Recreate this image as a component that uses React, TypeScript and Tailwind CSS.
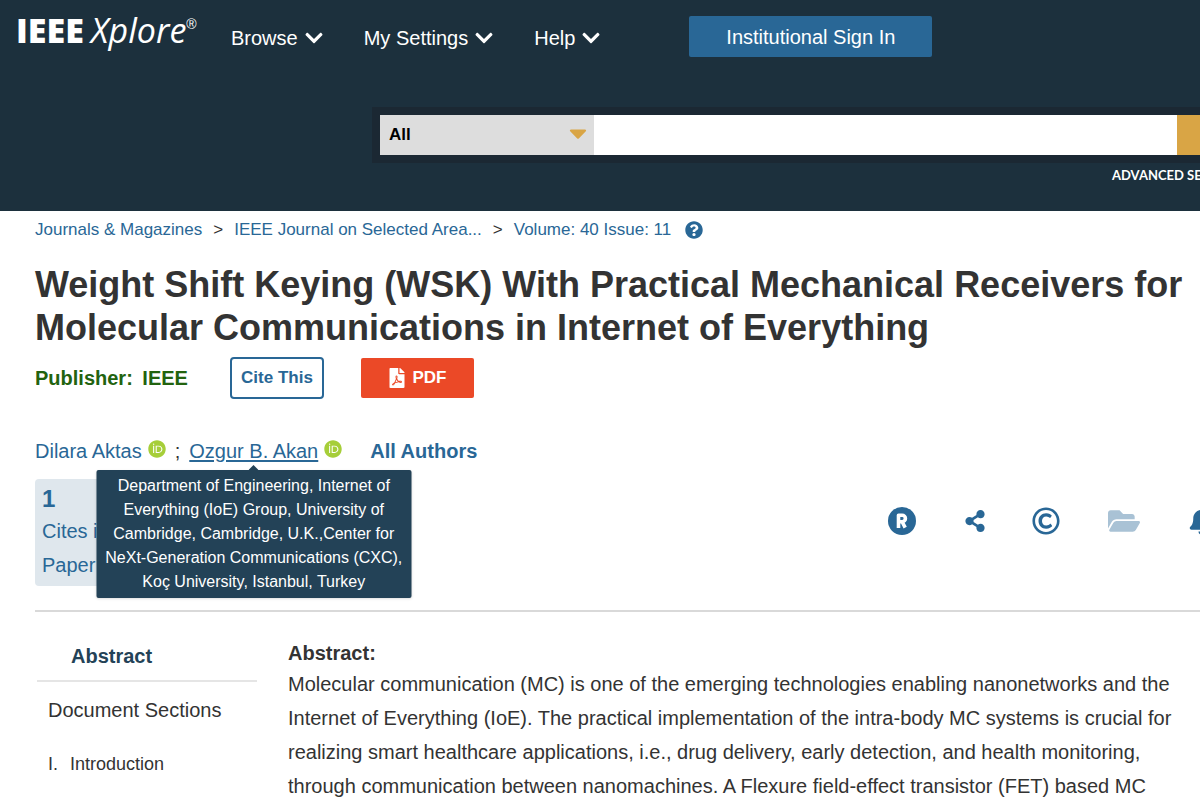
import { useState } from "react";
import {
  FaBell,
  FaCaretDown,
  FaChevronDown,
  FaFilePdf,
  FaFolderOpen,
  FaOrcid,
  FaQuestionCircle,
  FaRegCopyright,
  FaShareAlt,
} from "react-icons/fa";

const menus = ["Browse", "My Settings", "Help"];

const breadcrumbs = [
  "Journals & Magazines",
  "IEEE Journal on Selected Area...",
  "Volume: 40 Issue: 11",
];

const Logo = () => (
  <a
    href="#"
    className="flex w-[215px] shrink-0 pl-4 font-['Open_Sans'] text-[34px] leading-[60px] whitespace-nowrap"
  >
    <span className="font-extrabold">IEEE</span>
    <span className="ml-[7px] italic">Xplore</span>
    <span className="font-['Liberation_Sans'] text-sm leading-[48px]">®</span>
  </a>
);

const Header = () => {
  const [scope, setScope] = useState("All");
  const [query, setQuery] = useState("");

  return (
    <header className="h-[211px] bg-[#1c303d] text-white">
      <div className="flex h-[107px] items-start">
        <Logo />
        <nav className="flex gap-10 pt-[22px] pl-4">
          {menus.map((menu) => (
            <button
              key={menu}
              className="flex items-center gap-[6px] text-xl leading-8"
            >
              {menu}
              <FaChevronDown className="h-5 w-5" />
            </button>
          ))}
        </nav>
        <button className="mt-4 ml-[88px] h-[41px] w-[243px] rounded-xs bg-[#296796] text-xl">
          Institutional Sign In
        </button>
      </div>
      <form className="ml-[372px] flex bg-[#1b2833] py-2 pl-2">
        <div className="relative w-[214px] shrink-0">
          <select
            aria-label="Search scope"
            className="h-10 w-full appearance-none bg-[#dddddd] px-[9px] text-[17px] font-bold text-black"
            value={scope}
            onChange={(e) => setScope(e.target.value)}
          >
            <option>All</option>
          </select>
          <FaCaretDown className="pointer-events-none absolute top-1 right-[2px] h-7 w-7 text-[#d9a545]" />
        </div>
        <input
          type="text"
          aria-label="Search"
          className="h-10 min-w-0 grow bg-white px-3 text-[17px] text-black focus:outline-none"
          value={query}
          onChange={(e) => setQuery(e.target.value)}
        />
        <button
          type="button"
          aria-label="Search"
          className="w-[23px] shrink-0 bg-[#d9a545]"
        />
      </form>
      <div className="flex justify-end overflow-hidden">
        <a
          href="#"
          className="w-[88px] font-['Lato'] text-[13px] leading-6 font-bold whitespace-nowrap"
        >
          ADVANCED SEARCH
        </a>
      </div>
    </header>
  );
};

const Breadcrumbs = () => (
  <nav className="flex items-center text-[17px] leading-6 text-[#296796]">
    {breadcrumbs.map((crumb, index) => (
      <span key={crumb}>
        {index > 0 && <span className="mx-[11px] text-[#333333]">&gt;</span>}
        <a href="#">{crumb}</a>
      </span>
    ))}
    <button aria-label="Help" className="ml-[14px]">
      <FaQuestionCircle className="h-[18px] w-[18px]" />
    </button>
  </nav>
);

const Authors = () => (
  <div className="mt-10 flex items-center text-xl leading-6 text-[#296796]">
    <a href="#">Dilara Aktas</a>
    <FaOrcid className="mb-1 ml-[6px] h-[18px] w-[18px] text-[#a6ce39]" />
    <span className="mx-[9px] text-[#333333]">;</span>
    <span className="relative">
      <a href="#" className="underline underline-offset-2">
        Ozgur B. Akan
      </a>
      <span className="absolute top-[26px] left-1/2 z-10 flex w-[315px] -translate-x-1/2 flex-col items-center">
        <svg className="h-[5px] w-[10px]" viewBox="0 0 10 5" fill="#234257">
          <path d="M0 5 5 0l5 5z" />
        </svg>
        <span
          role="tooltip"
          className="w-full rounded-xs bg-[#234257] px-2 py-1 text-center text-base leading-6 text-white shadow"
        >
          Department of Engineering, Internet of Everything (IoE) Group,
          University of Cambridge, Cambridge, U.K.,Center for NeXt-Generation
          Communications (CXC), Koç University, Istanbul, Turkey
        </span>
      </span>
    </span>
    <FaOrcid className="mb-1 ml-[6px] h-[18px] w-[18px] text-[#a6ce39]" />
    <a href="#" className="ml-7 font-bold">
      All Authors
    </a>
  </div>
);

const Toolbar = () => (
  <div className="mt-7 flex h-7 items-center text-[#296796]">
    <button aria-label="Alert for references">
      <svg className="h-7 w-7" viewBox="0 0 28 28">
        <circle cx="14" cy="14" r="14" fill="#296796" />
        <path
          d="M10.5 21V8.3h3.7a3.2 3.2 0 0 1 0 6.4h-3.7M14 14.5l3.2 6.2"
          fill="none"
          stroke="#fff"
          strokeWidth="3.6"
          strokeLinejoin="round"
        />
      </svg>
    </button>
    <button aria-label="Share" className="ml-12">
      <FaShareAlt className="h-[22px] w-[22px]" />
    </button>
    <button aria-label="Copyright" className="ml-[46px]">
      <FaRegCopyright className="h-7 w-7" />
    </button>
    <button aria-label="Save to folder" className="ml-12">
      <FaFolderOpen className="h-8 w-8 text-[#a9c2d5]" />
    </button>
    <div className="ml-12 w-3 overflow-hidden">
      <button aria-label="Alerts" className="flex">
        <FaBell className="h-7 w-7 shrink-0" />
      </button>
    </div>
  </div>
);

const Sidebar = () => (
  <aside className="w-[222px] shrink-0 pt-8 text-[#333333]">
    <h2 className="ml-[2px] border-b-2 border-[#e5e5e5] pb-3 pl-[34px] text-xl leading-6 font-bold text-[#234257]">
      Abstract
    </h2>
    <div className="mt-4 pl-[13px]">
      <a href="#" className="block text-xl leading-6">
        Document Sections
      </a>
      <a href="#" className="mt-7 flex gap-3 text-lg leading-7">
        <span>I.</span>
        <span>Introduction</span>
      </a>
    </div>
  </aside>
);

const App = () => {
  return (
    <div className="h-screen overflow-hidden bg-white font-['Liberation_Sans',Arial,sans-serif] text-[#333333]">
      <Header />
      <main className="pt-[7px] pl-[35px]">
        <Breadcrumbs />
        <h1 className="mt-[21px] pr-3 text-4xl leading-[43px] font-bold">
          Weight Shift Keying (WSK) With Practical Mechanical Receivers for
          Molecular Communications in Internet of Everything
        </h1>
        <div className="mt-2 flex items-center">
          <p className="w-[195px] text-xl font-bold text-[#22630f]">
            Publisher: <span className="ml-1">IEEE</span>
          </p>
          <button className="h-[42px] w-[94px] rounded-sm border-2 border-[#296796] text-[17px] font-bold text-[#296796]">
            Cite This
          </button>
          <button className="ml-[37px] flex h-10 w-[113px] items-center justify-center gap-2 rounded-xs bg-[#eb4927] text-[17px] font-bold text-white">
            <FaFilePdf className="h-5 w-4" />
            PDF
          </button>
        </div>
        <Authors />
        <div className="mt-4 flex items-start justify-between border-b-2 border-[#d9d9d9] pb-6">
          <button className="w-[90px] rounded-sm bg-[#dfe7ed] px-[7px] py-1 text-left text-xl leading-[34px] whitespace-nowrap text-[#296796]">
            <span className="block text-2xl leading-[31px] font-bold">1</span>
            Cites in
            <br />
            Paper
          </button>
          <Toolbar />
        </div>
        <div className="flex">
          <Sidebar />
          <section className="ml-[31px] grow pt-[27px] pr-2">
            <h2 className="text-xl leading-7 font-bold">Abstract:</h2>
            <p className="text-xl leading-[34px]">
              Molecular communication (MC) is one of the emerging technologies
              enabling nanonetworks and the Internet of Everything (IoE). The
              practical implementation of the intra-body MC systems is crucial
              for realizing smart healthcare applications, i.e., drug delivery,
              early detection, and health monitoring, through communication
              between nanomachines. A Flexure field-effect transistor (FET)
              based MC
            </p>
          </section>
        </div>
      </main>
    </div>
  );
};

export default App;
